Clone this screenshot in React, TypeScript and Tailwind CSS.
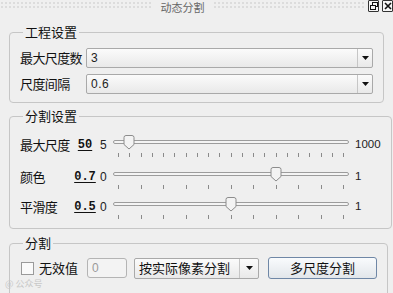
import React from "react";

const CJK = "font-['Microsoft_YaHei','Noto_Sans_CJK_SC',sans-serif]";

function Arrow() {
  return (
    <svg width="7" height="4" viewBox="0 0 7 4" className="block">
      <path d="M0 0h7L3.5 4z" fill="#111" />
    </svg>
  );
}

function Combo({ value, className = "" }: { value: string; className?: string }) {
  return (
    <div
      className={`flex h-[20px] items-stretch rounded-[2px] border border-[#a9a9a9] bg-[linear-gradient(#fbfbfb,#e9e9e9)] ${className}`}
    >
      <span className="flex flex-1 items-center pl-[4px] font-['Liberation_Sans',sans-serif] text-[12px] tracking-[0.5px] text-[#222]">
        {value}
      </span>
      <span className="flex w-[15px] items-center justify-center border-l border-[#c6c6c6]">
        <Arrow />
      </span>
    </div>
  );
}

function Group({ title, children, className = "" }: { title: string; children: React.ReactNode; className?: string }) {
  return (
    <fieldset className={`mx-[9px] rounded-[4px] border border-[#c6c6c6] px-[10px] ${className}`}>
      <legend className={`ml-[3px] px-[2px] text-[13px] leading-[18px] text-[#111] ${CJK}`}>{title}</legend>
      {children}
    </fieldset>
  );
}

function Slider({ ratio, ticks }: { ratio: number; ticks: number }) {
  const marks = Array.from({ length: ticks }, (_, i) => i / (ticks - 1));
  return (
    <div className="relative h-[28px] w-[236px]">
      <div className="absolute left-0 right-0 top-[6px] h-[4px] rounded-[2px] border border-[#9c9c9c] bg-[#f4f4f4]" />
      {marks.map((m) => (
        <div
          key={m}
          className="absolute top-[19px] h-[4px] w-px bg-[#8a8a8a]"
          style={{ left: 5 + m * 225 }}
        />
      ))}
      <svg
        width="12"
        height="15"
        viewBox="0 0 12 15"
        className="absolute top-[1px]"
        style={{ left: ratio * 225 - 0.5 }}
      >
        <path d="M1 2.5Q1 0.5 3 0.5H9Q11 0.5 11 2.5V9.5L6 14L1 9.5Z" fill="#f3f3f3" stroke="#8c8c8c" />
      </svg>
    </div>
  );
}

function SliderRow({
  label,
  value,
  min,
  max,
  ratio,
  ticks,
  className = "",
}: {
  label: string;
  value: string;
  min: string;
  max: string;
  ratio: number;
  ticks: number;
  className?: string;
}) {
  return (
    <div className={`flex items-center ${className}`}>
      <span className={`w-[54px] text-[13px] tracking-[-0.6px] text-[#111] ${CJK}`}>{label}</span>
      <span className="w-[22px] text-center font-['Liberation_Mono',monospace] text-[12px] font-bold text-[#111] underline underline-offset-2">
        {value}
      </span>
      <span className="ml-[4px] w-[13px] font-['Liberation_Sans',sans-serif] text-[12px] text-[#222]">{min}</span>
      <div className="mt-[6px]">
        <Slider ratio={ratio} ticks={ticks} />
      </div>
      <span className="ml-[6px] font-['Liberation_Sans',sans-serif] text-[11.5px] text-[#222]">{max}</span>
    </div>
  );
}

export default function App() {
  return (
    <div className={`relative h-[293px] w-[393px] overflow-hidden bg-[#efefef] ${CJK}`}>
      <div className="flex h-[15px] items-start">
        <div className="mt-[1px] h-[9px] flex-1 bg-[radial-gradient(#dcdcdc_1px,transparent_1.3px)] bg-[length:4px_4px]" />
        <span className="px-[8px] pt-[1px] text-[11px] leading-[13px] text-[#666]">动态分割</span>
        <div className="mt-[1px] h-[9px] flex-1 bg-[radial-gradient(#dcdcdc_1px,transparent_1.3px)] bg-[length:4px_4px]" />
        <div className="ml-[3px] flex gap-[3px]">
          <div className="flex h-[12px] w-[11px] items-center justify-center rounded-[1px] border border-[#333] bg-[#f6f6f6]">
            <svg width="8" height="8" viewBox="0 0 8 8">
              <rect x="2.5" y="0.5" width="5" height="4" fill="none" stroke="#111" />
              <rect x="0.5" y="3.5" width="5" height="4" fill="#f6f6f6" stroke="#111" />
            </svg>
          </div>
          <div className="flex h-[12px] w-[11px] items-center justify-center rounded-[1px] border border-[#333] bg-[#f6f6f6]">
            <svg width="8" height="8" viewBox="0 0 8 8">
              <path d="M1 1L7 7M7 1L1 7" stroke="#111" strokeWidth="1.6" />
            </svg>
          </div>
        </div>
      </div>

      <Group title="工程设置" className="mt-[8px] pb-[8px] pt-[7px]">
        <div className="flex items-center">
          <span className="w-[66px] text-[13px] tracking-[-0.6px] text-[#111]">最大尺度数</span>
          <Combo value="3" className="flex-1" />
        </div>
        <div className="mt-[6px] flex items-center">
          <span className="w-[66px] text-[13px] tracking-[-0.6px] text-[#111]">尺度间隔</span>
          <Combo value="0.6" className="flex-1" />
        </div>
      </Group>

      <Group title="分割设置" className="mt-[4px] pb-[6px] pt-[3px]">
        <SliderRow label="最大尺度" value="50" min="5" max="1000" ratio={0.045} ticks={21} className="h-[33px]" />
        <SliderRow label="颜色" value="0.7" min="0" max="1" ratio={0.7} ticks={11} className="h-[31px]" />
        <SliderRow label="平滑度" value="0.5" min="0" max="1" ratio={0.5} ticks={11} className="h-[30px]" />
      </Group>

      <Group title="分割" className="mt-[5px] h-[80px] pt-[5px]">
        <div className="flex items-center">
          <div className="ml-[1px] h-[13px] w-[13px] border border-[#9a9a9a] bg-[#fafafa]" />
          <span className="ml-[5px] w-[48px] text-[13px] text-[#111]">无效值</span>
          <div className="flex h-[20px] w-[40px] items-center rounded-[3px] border border-[#b4b4b4] bg-[#f3f3f3] pl-[4px] font-['Liberation_Sans',sans-serif] text-[12px] text-[#9a9a9a]">
            0
          </div>
          <div className="ml-[7px] flex h-[21px] w-[125px] items-stretch rounded-[2px] border border-[#a9a9a9] bg-[linear-gradient(#fbfbfb,#e9e9e9)]">
            <span className="flex flex-1 items-center pl-[4px] text-[13px] text-[#111]">按实际像素分割</span>
            <span className="flex w-[19px] items-center justify-center border-l border-[#c6c6c6]">
              <Arrow />
            </span>
          </div>
          <button className="ml-[9px] flex h-[22px] w-[109px] items-center justify-center rounded-[3px] border border-[#6f87a6] bg-[linear-gradient(#f9fbfd,#e2e6ea)] text-[13px] text-[#111]">
            多尺度分割
          </button>
        </div>
      </Group>

      <span className="absolute bottom-[3px] left-[5px] text-[9px] text-[#c8c8c8]">@ 公众号</span>
    </div>
  );
}
